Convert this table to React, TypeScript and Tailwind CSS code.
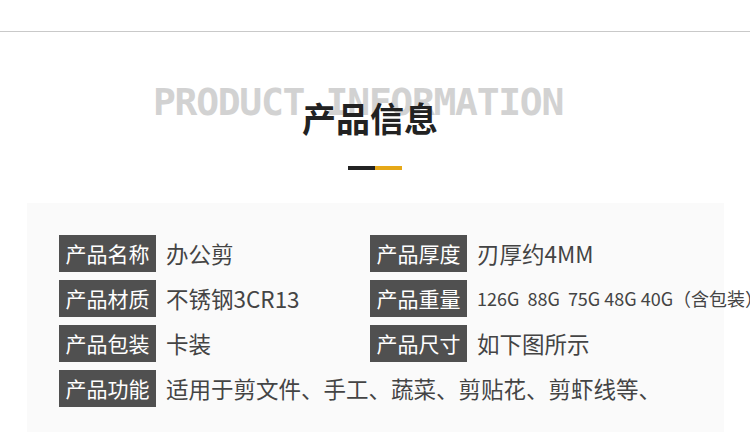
const rows: { label: string; value: string; small?: boolean }[][] = [
  [
    { label: "产品名称", value: "办公剪" },
    { label: "产品厚度", value: "刃厚约4MM" },
  ],
  [
    { label: "产品材质", value: "不锈钢3CR13" },
    { label: "产品重量", value: "126G  88G  75G 48G 40G（含包装）", small: true },
  ],
  [
    { label: "产品包装", value: "卡装" },
    { label: "产品尺寸", value: "如下图所示" },
  ],
];

const Field = ({ label, value, small }: { label: string; value: string; small?: boolean }) => (
  <div className="flex items-center whitespace-nowrap">
    <div className="h-[37px] w-[97px] bg-[#505050] text-white text-[21px] leading-[37px] text-center">
      {label}
    </div>
    <span
      className={
        small
          ? "ml-[10px] text-[18px] text-[#444] whitespace-pre"
          : "ml-[10px] text-[22.5px] text-[#444]"
      }
    >
      {value}
    </span>
  </div>
);

export default function App() {
  return (
    <div
      className="w-[750px] h-[432px] overflow-hidden bg-white"
      style={{ fontFamily: '"Noto Sans CJK SC", "Noto Sans", sans-serif' }}
    >
      <div className="h-[31px]" />
      <div className="h-px bg-[#c9c9c9]" />

      <div className="flex flex-col items-center">
        <div
          className="mt-[46px] pr-[34px] text-[38px] leading-[48px] font-bold tracking-[-1.3px] text-[#d2d2d2]"
          style={{ fontFamily: '"DejaVu Sans Mono", "Liberation Mono", monospace' }}
        >
          PRODUCT INFORMATION
        </div>
        <div className="-mt-[30px] pr-[10px] text-[34px] leading-[44px] font-bold text-[#222]">
          产品信息
        </div>
        <div className="mt-[26px] flex h-[4px]">
          <div className="w-[27px] bg-[#222]" />
          <div className="w-[27px] bg-[#e6a817]" />
        </div>
      </div>

      <div className="mt-[33px] ml-[27px] w-[697px] h-[240px] bg-[#fafafa] pt-[32px] pl-[32px]">
        <div className="flex flex-col gap-[8px]">
          {rows.map((r, i) => (
            <div key={i} className="grid grid-cols-[311px_1fr]">
              <Field {...r[0]} />
              <Field {...r[1]} />
            </div>
          ))}
          <Field label="产品功能" value="适用于剪文件、手工、蔬菜、剪贴花、剪虾线等、" />
        </div>
      </div>
    </div>
  );
}
